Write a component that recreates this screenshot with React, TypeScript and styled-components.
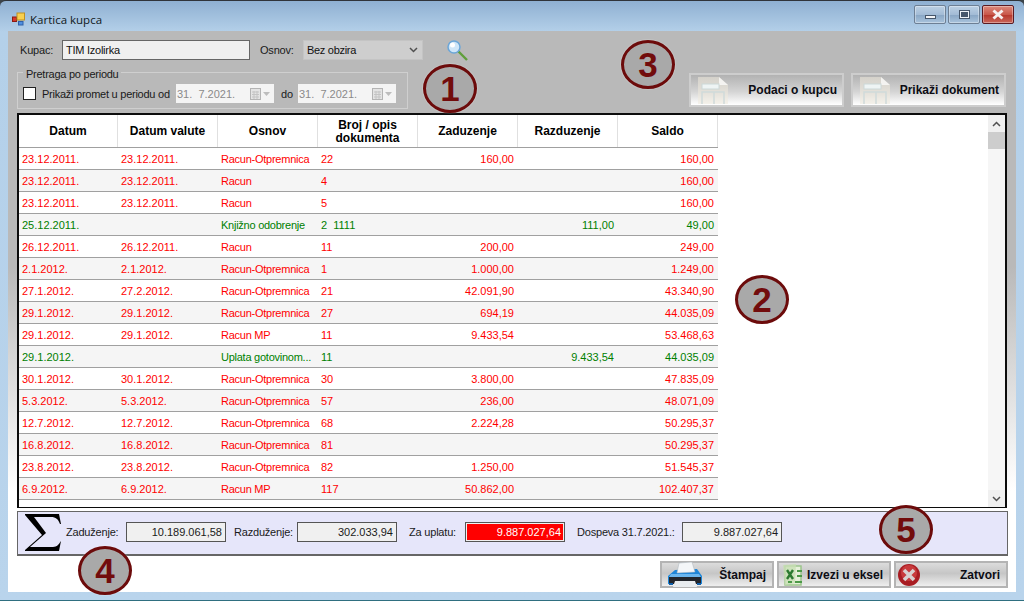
import React from 'react';
import styled, { createGlobalStyle } from 'styled-components';

const GlobalStyle = createGlobalStyle`
  html, body {
    margin: 0;
    padding: 0;
    overflow: hidden;
    background: #3c444a;
  }
  * {
    box-sizing: border-box;
  }
`;

const Window = styled.div`
  position: relative;
  width: 1024px;
  height: 601px;
  display: flex;
  flex-direction: column;
  padding: 0 8px 8px;
  background: linear-gradient(#8fb0d2 0, #b4d0e9 31px, #b9d4ec 100%);
  border-top: 1px solid #30343a;
  border-bottom: 1px solid #2f6f80;
  border-radius: 6px 6px 0 0;
  font-family: 'Liberation Sans', Arial, sans-serif;
  font-size: 11px;
  color: #111;
`;

const TitleBar = styled.div`
  height: 30px;
  flex: none;
  display: flex;
  align-items: center;
  padding: 6px 2px 0 4px;
`;

const TitleText = styled.span`
  margin-left: 4px;
  font-family: 'Open Sans', sans-serif;
  font-size: 11.5px;
  color: #101820;
`;

const Controls = styled.div`
  margin-left: auto;
  display: flex;
  gap: 2px;
  margin-top: -9px;
`;

const CaptionButton = styled.div<{ $close?: boolean }>`
  width: 32px;
  height: 19px;
  display: flex;
  align-items: center;
  justify-content: center;
  border: 1px solid ${p => (p.$close ? '#5a1a22' : '#6d7f94')};
  border-radius: 2px;
  box-shadow: inset 0 0 0 1px rgba(255, 255, 255, 0.35);
  background: ${p =>
    p.$close
      ? 'linear-gradient(#dc8a7c, #c9574a 50%, #b8392e 55%, #c9665a)'
      : 'linear-gradient(#bcd0e4, #a3bcd6 50%, #8ba8c6 55%, #a9c3dc)'};
`;

const MinGlyph = styled.span`
  width: 11px;
  height: 4px;
  margin-top: 5px;
  background: #f2f4f6;
  border: 1px solid #46566a;
`;

const MaxGlyph = styled.span`
  width: 11px;
  height: 9px;
  background: #46566a;
  border: 2px solid #eef2f6;
  outline: 1px solid #46566a;
  outline-offset: -1px;
  box-shadow: inset 0 0 0 1px #46566a;
`;

const Client = styled.div`
  flex: 1;
  display: flex;
  flex-direction: column;
  padding: 0 8px 0 9px;
  background: linear-gradient(#b9b9b9 0, #b9b9b9 42%, #ffffff 82%);
`;

const TopArea = styled.div`
  height: 82px;
  flex: none;
  display: flex;
  justify-content: space-between;
`;

const Filters = styled.div`
  display: flex;
  flex-direction: column;
`;

const CustomerRow = styled.div`
  display: flex;
  align-items: center;
  height: 20px;
  margin-top: 9px;
  padding-left: 3px;
`;

const FieldLabel = styled.span<{ $w: number }>`
  width: ${p => p.$w}px;
  flex: none;
  letter-spacing: -0.2px;
  white-space: pre;
  color: #1a1a1a;
`;

const CustomerInput = styled.div`
  width: 188px;
  height: 20px;
  margin-right: 10px;
  padding: 3px;
  line-height: 13px;
  letter-spacing: -0.25px;
  background: #f0f0f0;
  border: 1px solid #666;
`;

const ComboBox = styled.div`
  width: 120px;
  height: 20px;
  padding: 0 4px 0 3px;
  display: flex;
  align-items: center;
  justify-content: space-between;
  letter-spacing: -0.3px;
  background: #cecece;
  border: 1px solid #c4c4c4;
`;

const SearchIcon = styled.svg`
  width: 22px;
  height: 21px;
  margin-left: 23px;
`;

const PeriodGroup = styled.fieldset`
  width: 391px;
  height: 45px;
  margin: 4px 0 0;
  padding: 0 0 0 5px;
  display: flex;
  align-items: flex-start;
  border: 1px solid #cfcfcf;
`;

const PeriodLegend = styled.legend`
  padding: 4px 3px 0;
  font-size: 11px;
  line-height: 13px;
  letter-spacing: -0.25px;
  color: #1a1a1a;
`;

const PeriodRow = styled.div`
  display: flex;
  align-items: center;
  margin-top: 3px;
`;

const CheckBox = styled.span`
  width: 13px;
  height: 13px;
  margin-right: 6px;
  background: #fff;
  border: 1px solid #222;
`;

const PeriodText = styled.span`
  width: 128px;
  letter-spacing: -0.25px;
  white-space: pre;
  color: #1a1a1a;
`;

const DatePicker = styled.div`
  width: 98px;
  height: 19px;
  display: flex;
  align-items: center;
  justify-content: space-between;
  margin-left: 6px;
  padding: 0 3px 0 1px;
  background: #f4f4f4;
  color: #8a8a8a;
  white-space: pre;
`;

const DateTo = styled.span`
  width: 17px;
  margin-left: 7px;
  margin-right: -6px;
  color: #1a1a1a;
`;

const ActionButtons = styled.div`
  display: flex;
  align-items: flex-end;
  gap: 7px;
  padding: 0 2px 6px 0;
`;

const GradientButton = styled.div<{ $wide?: boolean }>`
  display: flex;
  align-items: center;
  justify-content: space-between;
  width: ${p => (p.$wide ? 155 : 114)}px;
  height: ${p => (p.$wide ? 34 : 27)}px;
  padding: ${p => (p.$wide ? '0 5px 0 6px' : '0 6px 0 0')};
  font-size: 12px;
  font-weight: bold;
  white-space: nowrap;
  color: #0c0c14;
  border: 2px solid ${p => (p.$wide ? '#cdcdcd' : '#b4b4b4')};
  background: ${p =>
    p.$wide
      ? 'linear-gradient(#b2b2b2, #d4d4d4 55%, #ffffff)'
      : 'linear-gradient(#dcdcdc, #c6c6c6 45%, #eeeeee)'};
`;

const ButtonIcon = styled.svg<{ $inset: number }>`
  margin-left: ${p => p.$inset}px;
  flex: none;
`;

const GridFrame = styled.div`
  height: 395px;
  width: 990px;
  flex: none;
  display: flex;
  background: #fff;
  border: 2px solid #0c0c0c;
  border-bottom-width: 1px;
  overflow: hidden;
`;

const GridBody = styled.div`
  flex: 1;
  overflow: hidden;
`;

const HeaderRow = styled.div`
  display: grid;
  grid-template-columns: 99px repeat(6, 100px);
  width: 699px;
  height: 33px;
  border-bottom: 1px solid #a0a0a0;
`;

const HeaderCell = styled.div`
  display: flex;
  align-items: center;
  justify-content: center;
  text-align: center;
  font-size: 12px;
  line-height: 13px;
  font-weight: bold;
  color: #000;
  border-right: 1px solid #e0e0e0;
  padding-top: 1px;
`;

const DataRow = styled.div<{ $credit: boolean; $shaded: boolean }>`
  display: grid;
  grid-template-columns: 99px repeat(6, 100px);
  width: 699px;
  height: 22px;
  align-items: center;
  color: ${p => (p.$credit ? '#008000' : '#ff0000')};
  background: ${p => (p.$shaded ? '#f5f5f5' : '#fff')};
  border-bottom: 1px solid #a0a0a0;
`;

const Cell = styled.div<{ $right?: boolean }>`
  padding: 0 ${p => (p.$right ? '4px' : '2px')} 0 ${p => (p.$right ? '0' : '3px')};
  text-align: ${p => (p.$right ? 'right' : 'left')};
  white-space: pre;
`;

const KindCell = styled(Cell)`
  letter-spacing: -0.25px;
`;

const ScrollBar = styled.div`
  width: 17px;
  flex: none;
  display: flex;
  flex-direction: column;
  background: #f6f6f6;
`;

const ScrollArrow = styled.div`
  height: 17px;
  flex: none;
  display: flex;
  align-items: center;
  justify-content: center;
  background: #f0f0f0;
`;

const ScrollThumb = styled.div`
  height: 17px;
  flex: none;
  background: #cdcdcd;
`;

const ScrollTrack = styled.div`
  flex: 1;
`;

const SummaryPanel = styled.div`
  width: 991px;
  height: 45px;
  flex: none;
  margin-top: 3px;
  display: flex;
  align-items: center;
  padding: 0 0 2px 7px;
  background: #e6e6fa;
  border: 1px solid #666;
  border-bottom-width: 2px;
`;

const SumIcon = styled.svg`
  width: 37px;
  height: 37px;
  margin-right: 3px;
  flex: none;
`;

const SummaryLabel = styled.span<{ $gap: number; $w: number }>`
  margin-left: ${p => p.$gap}px;
  width: ${p => p.$w}px;
  flex: none;
  letter-spacing: -0.2px;
  color: #1a1a1a;
  white-space: nowrap;
`;

const AmountBox = styled.div<{ $alert?: boolean }>`
  width: 100px;
  height: 20px;
  margin-left: ${p => (p.$alert ? 8 : 6)}px;
  padding: 3px 3px 0 0;
  text-align: right;
  line-height: 13px;
  color: ${p => (p.$alert ? '#fff' : '#1a1a1a')};
  background: ${p => (p.$alert ? '#ff0000' : '#f0f0f0')};
  border: 1px solid #555;
  box-shadow: ${p => (p.$alert ? 'inset 0 0 0 1px #f0f0f0' : 'none')};
`;

const Footer = styled.div`
  display: flex;
  justify-content: flex-end;
  gap: 3px;
  width: 991px;
  margin-top: 5px;
`;

const Badge = styled.div<{ $x: number; $y: number }>`
  position: absolute;
  left: ${p => p.$x}px;
  top: ${p => p.$y}px;
  width: 54px;
  height: 49px;
  display: flex;
  align-items: center;
  justify-content: center;
  border: 3px solid #6c0b0b;
  border-radius: 50%;
  background: #a9a9a9;
  color: #720c0c;
  font-size: 35px;
  font-weight: bold;
  box-shadow: 0 0 0 1px rgba(255, 255, 255, 0.15);
`;

type Row = {
  date: string;
  due?: string;
  kind: string;
  doc: string;
  debit?: string;
  credit?: string;
  saldo: string;
};

const RO = 'Racun-Otpremnica';

const rows: Row[] = [
  { date: '23.12.2011.', due: '23.12.2011.', kind: RO, doc: '22', debit: '160,00', saldo: '160,00' },
  { date: '23.12.2011.', due: '23.12.2011.', kind: 'Racun', doc: '4', saldo: '160,00' },
  { date: '23.12.2011.', due: '23.12.2011.', kind: 'Racun', doc: '5', saldo: '160,00' },
  { date: '25.12.2011.', kind: 'Knjižno odobrenje', doc: '2  1111', credit: '111,00', saldo: '49,00' },
  { date: '26.12.2011.', due: '26.12.2011.', kind: 'Racun', doc: '11', debit: '200,00', saldo: '249,00' },
  { date: '2.1.2012.', due: '2.1.2012.', kind: RO, doc: '1', debit: '1.000,00', saldo: '1.249,00' },
  { date: '27.1.2012.', due: '27.2.2012.', kind: RO, doc: '21', debit: '42.091,90', saldo: '43.340,90' },
  { date: '29.1.2012.', due: '29.1.2012.', kind: RO, doc: '27', debit: '694,19', saldo: '44.035,09' },
  { date: '29.1.2012.', due: '29.1.2012.', kind: 'Racun MP', doc: '11', debit: '9.433,54', saldo: '53.468,63' },
  { date: '29.1.2012.', kind: 'Uplata gotovinom...', doc: '11', credit: '9.433,54', saldo: '44.035,09' },
  { date: '30.1.2012.', due: '30.1.2012.', kind: RO, doc: '30', debit: '3.800,00', saldo: '47.835,09' },
  { date: '5.3.2012.', due: '5.3.2012.', kind: RO, doc: '57', debit: '236,00', saldo: '48.071,09' },
  { date: '12.7.2012.', due: '12.7.2012.', kind: RO, doc: '68', debit: '2.224,28', saldo: '50.295,37' },
  { date: '16.8.2012.', due: '16.8.2012.', kind: RO, doc: '81', saldo: '50.295,37' },
  { date: '23.8.2012.', due: '23.8.2012.', kind: RO, doc: '82', debit: '1.250,00', saldo: '51.545,37' },
  { date: '6.9.2012.', due: '6.9.2012.', kind: 'Racun MP', doc: '117', debit: '50.862,00', saldo: '102.407,37' },
  { date: '6.9.2012.', kind: 'Uplata', doc: '117', credit: '50.862,00', saldo: '51.545,37' },
];

const headers = ['Datum', 'Datum valute', 'Osnov', 'Broj / opis dokumenta', 'Zaduzenje', 'Razduzenje', 'Saldo'];

const AppIcon = () => (
  <svg width="14" height="14" viewBox="0 0 14 14">
    <rect x="0.5" y="5" width="4" height="4.5" fill="#d8362a" stroke="#8a1a12" />
    <rect x="5" y="1" width="7.5" height="7" fill="#f8d050" stroke="#c09020" />
    <rect x="6.5" y="9.5" width="4.5" height="3.5" fill="#4f8fe0" stroke="#2f60a8" />
  </svg>
);

const Chevron = ({ up }: { up?: boolean }) => (
  <svg width="9" height="6" viewBox="0 0 9 6">
    <path d={up ? 'M1 5 L4.5 1.5 L8 5' : 'M1 1 L4.5 4.5 L8 1'} fill="none" stroke="#505050" strokeWidth="1.5" />
  </svg>
);

const CalendarGlyph = () => (
  <svg width="22" height="14" viewBox="0 0 22 14">
    <rect x="1.5" y="1.5" width="10" height="11" fill="#e4e4e4" stroke="#b4b4b4" />
    <path d="M3 5 H10 M3 7.5 H10 M3 10 H10 M5 4 V12 M8 4 V12" stroke="#c4c4c4" />
    <path d="M14 5 L21 5 L17.5 9 Z" fill="#bdbdbd" />
  </svg>
);

const DocIcon = () => (
  <svg width="32" height="28" viewBox="0 0 32 28">
    <path d="M1 28 V1 H22 L31 9 V28 Z" fill="#efeadc" opacity="0.55" />
    <path d="M22 1 V9 H31 Z" fill="#ffffff" opacity="0.7" />
    <rect x="5" y="8" width="17" height="5" fill="#eef4f4" stroke="#ccd8d8" />
    <path d="M5 28 V16 H27 V28 M17 16 V28" fill="none" stroke="#d0dada" strokeWidth="1.5" />
  </svg>
);

const PrinterIcon = () => (
  <ButtonIcon $inset={5} width="36" height="25" viewBox="0 0 36 25">
    <path d="M1 14 L8 8 L30 7 L35 14 V22 H1 Z" fill="#1f86d8" />
    <path d="M12 1 L25 0 L28 10 L10 11 Z" fill="#f4f6f8" stroke="#aab4bc" strokeWidth="0.5" />
    <path d="M4 12 H32 L34 15 H2 Z" fill="#6ab6ee" />
    <path d="M2 15 H34 V22 H2 Z" fill="#22262c" />
    <path d="M8 19 H28 L30 25 H6 Z" fill="#e8ecef" />
    <rect x="2" y="21" width="4" height="2" fill="#0f5ea8" />
    <rect x="30" y="21" width="4" height="2" fill="#0f5ea8" />
  </ButtonIcon>
);

const ExcelIcon = () => (
  <ButtonIcon $inset={3} width="24" height="24" viewBox="0 0 24 24">
    <path d="M3 3 H19 V22 H3 Z" fill="#e6f0da" stroke="#9cc58c" strokeWidth="1.5" />
    <path d="M1 2 L14 1 L13 20 L3 22 Z" fill="#c8dfb4" opacity="0.8" />
    <path d="M5 7 L11 16 M11 7 L5 16" stroke="#2c7a30" strokeWidth="2.4" />
    <path d="M15 8 H20 M15 13 H20 M6 19 H10 M13 19 H20" stroke="#4c9a48" strokeWidth="2" />
  </ButtonIcon>
);

const CloseIcon = () => (
  <ButtonIcon $inset={1} width="24" height="24" viewBox="0 0 24 24">
    <circle cx="12" cy="12" r="11" fill="#a81c22" />
    <circle cx="12" cy="10" r="8" fill="#c83a3c" />
    <path d="M7 7 L17 17 M17 7 L7 17" stroke="#d8d0d0" strokeWidth="3.6" />
  </ButtonIcon>
);

export default function App() {
  return (
    <Window>
      <GlobalStyle />
      <TitleBar>
        <AppIcon />
        <TitleText>Kartica kupca</TitleText>
        <Controls>
          <CaptionButton>
            <MinGlyph />
          </CaptionButton>
          <CaptionButton>
            <MaxGlyph />
          </CaptionButton>
          <CaptionButton $close>
            <svg width="14" height="11" viewBox="0 0 14 11">
              <path d="M2.5 1.5 L11.5 9.5 M11.5 1.5 L2.5 9.5" stroke="#f6f0f0" strokeWidth="3" />
            </svg>
          </CaptionButton>
        </Controls>
      </TitleBar>

      <Client>
        <TopArea>
          <Filters>
            <CustomerRow>
              <FieldLabel $w={42}>Kupac:</FieldLabel>
              <CustomerInput>TIM Izolirka</CustomerInput>
              <FieldLabel $w={43}>Osnov:</FieldLabel>
              <ComboBox>
                Bez obzira
                <Chevron />
              </ComboBox>
              <SearchIcon viewBox="0 0 22 21">
                <path d="M12 11 L21 20" stroke="#5f9e3a" strokeWidth="2.4" />
                <circle cx="8" cy="7" r="6" fill="#cfe6f8" stroke="#6ba6d8" strokeWidth="1.5" />
                <circle cx="6.5" cy="5" r="2.5" fill="#ffffff" />
              </SearchIcon>
            </CustomerRow>
            <PeriodGroup>
              <PeriodLegend>Pretraga po periodu</PeriodLegend>
              <PeriodRow>
                <CheckBox />
                <PeriodText>Prikaži promet u periodu od</PeriodText>
                <DatePicker>
                  31.  7.2021.
                  <CalendarGlyph />
                </DatePicker>
                <DateTo>do</DateTo>
                <DatePicker>
                  31.  7.2021.
                  <CalendarGlyph />
                </DatePicker>
              </PeriodRow>
            </PeriodGroup>
          </Filters>
          <ActionButtons>
            <GradientButton $wide>
              <DocIcon />
              Podaci o kupcu
            </GradientButton>
            <GradientButton $wide>
              <DocIcon />
              Prikaži dokument
            </GradientButton>
          </ActionButtons>
        </TopArea>

        <GridFrame>
          <GridBody>
            <HeaderRow>
              {headers.map(h => (
                <HeaderCell key={h}>{h}</HeaderCell>
              ))}
            </HeaderRow>
            {rows.map((r, i) => (
              <DataRow key={i} $credit={!!r.credit} $shaded={i % 2 === 1}>
                <Cell>{r.date}</Cell>
                <Cell>{r.due}</Cell>
                <KindCell>{r.kind}</KindCell>
                <Cell>{r.doc}</Cell>
                <Cell $right>{r.debit}</Cell>
                <Cell $right>{r.credit}</Cell>
                <Cell $right>{r.saldo}</Cell>
              </DataRow>
            ))}
          </GridBody>
          <ScrollBar>
            <ScrollArrow>
              <Chevron up />
            </ScrollArrow>
            <ScrollThumb />
            <ScrollTrack />
            <ScrollArrow>
              <Chevron />
            </ScrollArrow>
          </ScrollBar>
        </GridFrame>

        <SummaryPanel>
          <SumIcon viewBox="0 0 37 37">
            <path d="M0 0 H34 L36 10 H35 C33 5 31 3 26 3 H9 L21 19 L5 33 H28 C32 33 34 30 36 27 L34 37 H0 V36 L17 21 L0 1 Z" fill="#000" />
          </SumIcon>
          <SummaryLabel $gap={1} $w={54}>Zaduženje:</SummaryLabel>
          <AmountBox>10.189.061,58</AmountBox>
          <SummaryLabel $gap={8} $w={57}>Razduženje:</SummaryLabel>
          <AmountBox>302.033,94</AmountBox>
          <SummaryLabel $gap={12} $w={48}>Za uplatu:</SummaryLabel>
          <AmountBox $alert>9.887.027,64</AmountBox>
          <SummaryLabel $gap={12} $w={99}>Dospeva 31.7.2021.:</SummaryLabel>
          <AmountBox>9.887.027,64</AmountBox>
        </SummaryPanel>

        <Footer>
          <GradientButton>
            <PrinterIcon />
            Štampaj
          </GradientButton>
          <GradientButton>
            <ExcelIcon />
            Izvezi u eksel
          </GradientButton>
          <GradientButton>
            <CloseIcon />
            Zatvori
          </GradientButton>
        </Footer>
      </Client>

      <Badge $x={423} $y={63}>1</Badge>
      <Badge $x={735} $y={274}>2</Badge>
      <Badge $x={621} $y={39}>3</Badge>
      <Badge $x={78} $y={545}>4</Badge>
      <Badge $x={879} $y={504}>5</Badge>
    </Window>
  );
}
